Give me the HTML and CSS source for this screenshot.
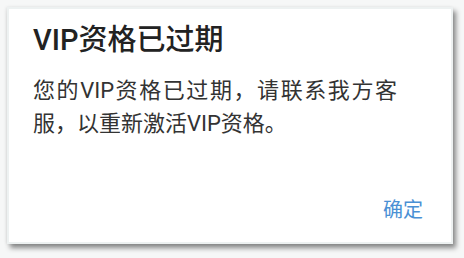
FILE: index.html
```html
<!DOCTYPE html>
<html lang="zh-CN">
<head>
    <meta charset="UTF-8">
    <meta name="viewport" content="width=device-width, initial-scale=1.0">
    <title>VIP资格已过期</title>
    <link rel="stylesheet" href="styles.css">
</head>
<body>
    <div class="dialog">
        <h2 class="dialog-title">VIP资格已过期</h2>
        <p class="dialog-message">您的VIP资格已过期，请联系我方客服，以重新激活VIP资格。</p>
        <div class="dialog-actions">
            <button class="btn-confirm">确定</button>
        </div>
    </div>
</body>
</html>
```

FILE: styles.css
```css
body {
    margin: 0;
    padding: 7px 0 0 7px;
    background-color: #f6f7f7;
    font-family: Roboto, "Noto Sans CJK SC", sans-serif;
    width: 464px;
    height: 258px;
    box-sizing: border-box;
    overflow: hidden;
}

.dialog {
    width: 446px;
    height: 237px;
    box-sizing: border-box;
    background-color: #fff;
    border: 2px solid #edf1f1;
    box-shadow: 3px 4px 5px rgba(0, 0, 0, 0.45), -1px 0 3px rgba(0, 0, 0, 0.08);
    padding: 14px 28px 0 24px;
    display: flex;
    flex-direction: column;
}

.dialog-title {
    margin: 0;
    font-size: 29px;
    line-height: 34px;
    font-weight: 500;
    color: #222;
}

.dialog-message {
    margin: 17px 0 0 0;
    width: 364px;
    font-size: 22px;
    line-height: 33px;
    color: #333;
    text-align: justify;
}

.dialog-actions {
    margin-top: auto;
    padding-bottom: 20px;
    display: flex;
    justify-content: flex-end;
}

.btn-confirm {
    background: none;
    border: none;
    padding: 0;
    font-family: inherit;
    font-size: 20px;
    line-height: 24px;
    color: #4a90d4;
    cursor: pointer;
}
```
